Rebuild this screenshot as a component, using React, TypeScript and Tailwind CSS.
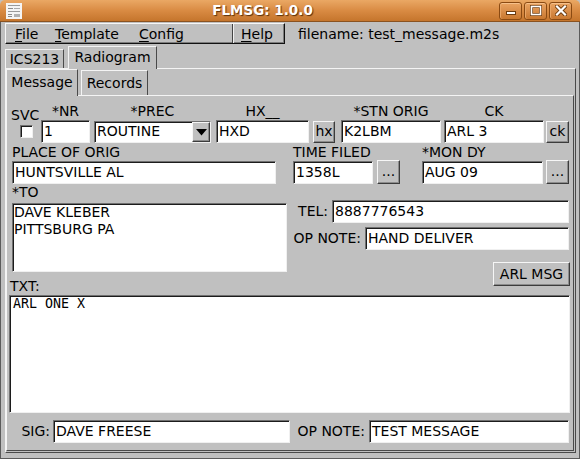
import React from "react";

const DOWN =
  "border border-t-[#707070] border-l-[#707070] border-b-[#f0f0f0] border-r-[#f0f0f0] shadow-[inset_1px_1px_0_#1c1c1c]";
const UP =
  "border border-t-[#f6f6f6] border-l-[#f6f6f6] border-b-[#3c3c3c] border-r-[#3c3c3c] shadow-[inset_-1px_-1px_0_#8c8c8c]";

function Input({ cls, text }: { cls: string; text?: string }) {
  return (
    <div
      className={`${DOWN} bg-white flex items-center pl-[2px] pb-[2px] whitespace-nowrap overflow-hidden leading-none ${cls}`}
    >
      {text}
    </div>
  );
}

function Btn({ cls, children }: { cls: string; children: React.ReactNode }) {
  return (
    <div
      className={`${UP} bg-[#c0c0c0] flex items-center justify-center leading-none whitespace-nowrap ${cls}`}
    >
      {children}
    </div>
  );
}

function Label({ children, cls = "" }: { children?: React.ReactNode; cls?: string }) {
  return <div className={`h-[16px] leading-[16px] whitespace-nowrap ${cls}`}>{children}</div>;
}

function TitleButton({ kind }: { kind: "min" | "max" | "close" }) {
  return (
    <div className="w-[23px] h-[18px] rounded-[3px] border border-[#8a4a12] bg-linear-to-b from-[#eaa462] to-[#c9782f] shadow-[inset_0_1px_0_#f6c08a,inset_1px_0_0_#e9a666] flex items-center justify-center">
      {kind === "min" && (
        <svg width="12" height="10" viewBox="0 0 12 10">
          <rect x="1.5" y="5.5" width="9" height="3" fill="#fff" stroke="#6b3a0e" strokeWidth="1" />
        </svg>
      )}
      {kind === "max" && (
        <svg width="12" height="11" viewBox="0 0 12 11">
          <rect x="1.5" y="1.5" width="9" height="8" fill="none" stroke="#6b3a0e" strokeWidth="3" />
          <rect x="1.5" y="1.5" width="9" height="8" fill="none" stroke="#fff" strokeWidth="1.6" />
        </svg>
      )}
      {kind === "close" && (
        <svg width="12" height="11" viewBox="0 0 12 11">
          <path d="M2 1.5 L10 9.5 M10 1.5 L2 9.5" stroke="#6b3a0e" strokeWidth="4" strokeLinecap="square" />
          <path d="M2 1.5 L10 9.5 M10 1.5 L2 9.5" stroke="#fff" strokeWidth="2.2" strokeLinecap="square" />
        </svg>
      )}
    </div>
  );
}

function Arrow() {
  return (
    <svg width="11" height="7" viewBox="0 0 11 7">
      <polygon points="0,0 11,0 5.5,6.5" fill="#000" />
    </svg>
  );
}

export default function App() {
  return (
    <div className="w-[580px] h-[459px] flex flex-col bg-[#c0c0c0] font-['DejaVu_Sans',sans-serif] text-[14px] text-black overflow-hidden">
      {/* Title bar */}
      <div className="h-[22px] shrink-0 rounded-t-[5px] bg-linear-to-b from-[#eaa864] via-[#d98b43] to-[#c5752c] border-b border-[#8a5220] flex items-center">
        <div className="ml-[6px] w-[16px] h-[16px]">
          <svg width="16" height="16" viewBox="0 0 16 16">
            <rect x="0" y="0" width="16" height="16" fill="#f4f4f4" />
            <rect x="2" y="2" width="12" height="1" fill="#9a9a9a" />
            <rect x="2" y="5" width="5" height="1" fill="#8a8a8a" />
            <rect x="8" y="5" width="6" height="1" fill="#aaa" />
            <rect x="2" y="8" width="12" height="1" fill="#9a9a9a" />
            <rect x="2" y="11" width="4" height="1" fill="#8a8a8a" />
            <rect x="8" y="11" width="6" height="3" fill="#b0b0b0" />
            <rect x="2" y="13" width="4" height="1" fill="#8a8a8a" />
          </svg>
        </div>
        <div className="flex-1 text-center pl-[4px] text-white font-bold text-[13.5px] leading-none [text-shadow:1px_1px_1px_#5a300c]">
          FLMSG: 1.0.0
        </div>
        <div className="flex gap-[2px] mr-[8px]">
          <TitleButton kind="min" />
          <TitleButton kind="max" />
          <TitleButton kind="close" />
        </div>
      </div>

      {/* Body */}
      <div className="flex-1 flex flex-col shadow-[inset_1px_0_0_#5b5b5b,inset_-1px_0_0_#5b5b5b,inset_0_-1px_0_#5b5b5b]">
        {/* Menu row */}
        <div className="mt-[1px] h-[21px] flex items-center">
          <div className="ml-[5px] w-[280px] h-[21px] flex items-center border-t border-l border-t-[#f6f6f6] border-l-[#f6f6f6] border-b border-r border-b-[#111] border-r-[#111] shadow-[inset_-1px_-1px_0_#7c7c7c]">
            <span className="ml-[9px] w-[40px] leading-none">
              <span className="underline underline-offset-2">F</span>ile
            </span>
            <span className="w-[84px] leading-none">
              <span className="underline underline-offset-2">T</span>emplate
            </span>
            <span className="w-[93px] leading-none">
              <span className="underline underline-offset-2">C</span>onfig
            </span>
            <div className="w-[52px] h-full flex items-center pl-[8px] border-l border-l-[#444] shadow-[inset_1px_0_0_#f0f0f0] leading-none">
              <span>
                <span className="underline underline-offset-2">H</span>elp
              </span>
            </div>
          </div>
          <div className="ml-[13px] leading-none">filename: test_message.m2s</div>
        </div>

        {/* Top tabs */}
        <div className="mt-[2px] ml-[5px] h-[22px] flex items-end">
          <div className="w-[59px] h-[19px] border-t border-l border-r border-t-[#f4f4f4] border-l-[#f4f4f4] border-r-[#4a4a4a] flex items-center justify-center leading-none">
            ICS213
          </div>
          <div className="ml-[4px] w-[89px] h-[23px] -mb-px relative z-10 bg-[#c0c0c0] border-t border-l border-r border-t-[#f4f4f4] border-l-[#f4f4f4] border-r-[#4a4a4a] flex items-center justify-center leading-none pb-[2px]">
            Radiogram
          </div>
        </div>

        {/* Outer panel */}
        <div className="ml-[5px] w-[571px] h-[385px] border border-t-[#f4f4f4] border-l-[#f4f4f4] border-r-[#4a4a4a] border-b-[#4a4a4a] flex flex-col">
          {/* Inner tabs */}
          <div className="h-[26px] flex items-end">
            <div className="w-[72px] h-[27px] -mb-px relative z-10 bg-[#c0c0c0] border-t border-l border-r border-t-[#f4f4f4] border-l-[#f4f4f4] border-r-[#4a4a4a] flex items-center justify-center leading-none pb-[2px]">
              Message
            </div>
            <div className="ml-[3px] w-[67px] h-[25px] border-t border-l border-r border-t-[#f4f4f4] border-l-[#f4f4f4] border-r-[#4a4a4a] flex items-center justify-center leading-none">
              Records
            </div>
          </div>

          {/* Inner panel */}
          <div className="w-[568px] h-[356px] border border-t-[#f4f4f4] border-l-[#f4f4f4] border-r-[#4a4a4a] border-b-[#4a4a4a] flex flex-col">
            {/* Row 1 */}
            <div className="mt-[7px] flex items-start">
              <div className="ml-[4px] w-[28px] flex flex-col">
                <div className="mt-[4px]">
                  <Label>SVC</Label>
                </div>
                <div className={`ml-[9px] mt-[2px] w-[13px] h-[13px] bg-white ${DOWN}`} />
              </div>
              <div className="ml-[2px] w-[49px] flex flex-col items-center">
                <Label>*NR</Label>
                <Input cls="mt-[1px] w-full h-[23px]" text="1" />
              </div>
              <div className="ml-[4px] w-[117px] flex flex-col items-center">
                <Label>*PREC</Label>
                <div className={`${DOWN} mt-[2px] w-full h-[22px] bg-white flex items-stretch`}>
                  <div className="flex-1 flex items-center pl-[2px] pb-[2px] leading-none">ROUTINE</div>
                  <div className={`${UP} w-[18px] bg-[#c0c0c0] flex items-center justify-center`}>
                    <Arrow />
                  </div>
                </div>
              </div>
              <div className="ml-[5px] w-[93px] flex flex-col items-center">
                <Label>HX__</Label>
                <Input cls="mt-[1px] w-full h-[23px]" text="HXD" />
              </div>
              <div className="ml-[4px] w-[22px] flex flex-col">
                <Label />
                <Btn cls="mt-[2px] w-full h-[22px] pb-[2px]">hx</Btn>
              </div>
              <div className="ml-[6px] w-[100px] flex flex-col items-center">
                <Label>*STN ORIG</Label>
                <Input cls="mt-[1px] w-full h-[23px]" text="K2LBM" />
              </div>
              <div className="ml-[3px] w-[100px] flex flex-col items-center">
                <Label>CK</Label>
                <Input cls="mt-[1px] w-full h-[23px]" text="ARL 3" />
              </div>
              <div className="ml-[2px] w-[23px] flex flex-col">
                <Label />
                <Btn cls="mt-[2px] w-full h-[22px] pb-[2px]">ck</Btn>
              </div>
            </div>

            {/* Row 2 */}
            <div className="mt-[1px] flex items-start">
              <div className="ml-[5px] w-[264px] flex flex-col">
                <Label>PLACE OF ORIG</Label>
                <Input cls="mt-[1px] w-full h-[23px]" text="HUNTSVILLE AL" />
              </div>
              <div className="ml-[17px] w-[80px] flex flex-col">
                <Label>TIME FILED</Label>
                <Input cls="mt-[1px] w-full h-[23px]" text="1358L" />
              </div>
              <div className="ml-[4px] w-[23px] flex flex-col">
                <Label />
                <Btn cls="mt-[0px] w-full h-[24px] pb-[2px]">...</Btn>
              </div>
              <div className="ml-[22px] w-[121px] flex flex-col">
                <Label>*MON DY</Label>
                <Input cls="mt-[1px] w-full h-[23px]" text="AUG 09" />
              </div>
              <div className="ml-[3px] w-[23px] flex flex-col">
                <Label />
                <Btn cls="mt-[0px] w-full h-[24px] pb-[2px]">...</Btn>
              </div>
            </div>

            {/* Row 3 */}
            <div className="flex items-start">
              <div className="ml-[5px] w-[275px] flex flex-col">
                <Label>*TO</Label>
                <div className={`${DOWN} mt-[3px] h-[69px] bg-white pl-[1px] leading-[17px]`}>
                  <div>DAVE KLEBER</div>
                  <div>PITTSBURG PA</div>
                </div>
                <div className="mt-[6px] -ml-[2px]">
                  <Label>TXT:</Label>
                </div>
              </div>
              <div className="w-[283px] flex flex-col items-end">
                <div className="mt-[16px] mr-[1px] flex items-center">
                  <span className="leading-none pb-[1px]">TEL:</span>
                  <Input cls="ml-[4px] w-[237px] h-[23px]" text="8887776543" />
                </div>
                <div className="mt-[4px] mr-[1px] flex items-center">
                  <span className="leading-none pb-[1px]">OP NOTE:</span>
                  <Input cls="ml-[4px] w-[204px] h-[23px]" text="HAND DELIVER" />
                </div>
                <Btn cls="mt-[12px] w-[77px] h-[24px] pb-[1px]">ARL MSG</Btn>
              </div>
            </div>

            {/* TXT box */}
            <div
              className={`${DOWN} mt-[1px] ml-[2px] w-[561px] h-[118px] bg-white pl-[3px] font-['DejaVu_Sans_Mono',monospace] text-[13.3px] leading-[16px] whitespace-pre`}
            >
              ARL ONE X
            </div>

            {/* Bottom row */}
            <div className="mt-[7px] h-[23px] flex items-center">
              <span className="w-[43px] text-right leading-none pb-[1px]">SIG:</span>
              <Input cls="ml-[3px] w-[237px] h-[23px]" text="DAVE FREESE" />
              <span className="w-[75px] text-right leading-none pb-[1px]">OP NOTE:</span>
              <Input cls="ml-[4px] w-[200px] h-[23px]" text="TEST MESSAGE" />
            </div>
          </div>
        </div>
      </div>
    </div>
  );
}
